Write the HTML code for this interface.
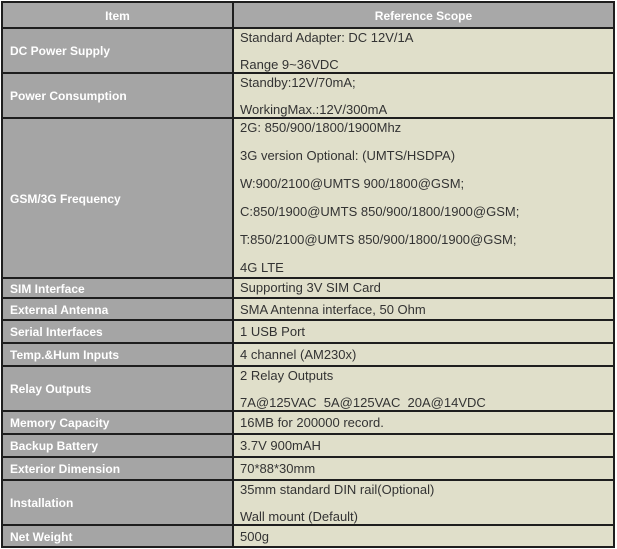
<!DOCTYPE html><html><head><style>
body{margin:0;background:#fff;width:617px;height:549px;position:relative;overflow:hidden;font-family:"Liberation Sans",Arial,sans-serif}
.r{position:absolute;left:1px;width:614px;box-sizing:border-box;border:2px solid #1e1e1e;border-bottom:none;display:flex}
.l{width:231px;background:#a5a5a5;color:#fff;font-weight:bold;font-size:12px;display:flex;align-items:center;padding-left:7px;box-sizing:border-box;border-right:2px solid #1e1e1e}
.v{flex:1;background:#e0dfca;color:#333;font-size:13px;padding:1px 0 0 6px;line-height:16px}
.v p{margin:0 0 12px}
.t p{margin-bottom:11px}
.h .l,.h .v{background:#a8a8a8;color:#fff;font-weight:bold;font-size:12px;justify-content:center;display:flex;align-items:center;padding:0}
.end{position:absolute;left:1px;top:546px;width:614px;height:2px;background:#1e1e1e}
</style></head><body>
<div class="r h" style="top:1px;height:27px"><div class="l">Item</div><div class="v">Reference Scope</div></div>
<div class="r" style="top:27px;height:46px"><div class="l">DC Power Supply</div><div class="v t"><p>Standard Adapter: DC 12V/1A</p><p>Range 9~36VDC</p></div></div>
<div class="r" style="top:72px;height:46px"><div class="l">Power Consumption</div><div class="v t"><p>Standby:12V/70mA;</p><p>WorkingMax.:12V/300mA</p></div></div>
<div class="r" style="top:117px;height:161px"><div class="l">GSM/3G Frequency</div><div class="v"><p>2G: 850/900/1800/1900Mhz</p><p>3G version Optional: (UMTS/HSDPA)</p><p>W:900/2100@UMTS 900/1800@GSM;</p><p>C:850/1900@UMTS 850/900/1800/1900@GSM;</p><p>T:850/2100@UMTS 850/900/1800/1900@GSM;</p><p>4G LTE</p></div></div>
<div class="r" style="top:277px;height:21px"><div class="l">SIM Interface</div><div class="v">Supporting 3V SIM Card</div></div>
<div class="r" style="top:297px;height:23px"><div class="l">External Antenna</div><div class="v" style="padding-top:3px">SMA Antenna interface, 50 Ohm</div></div>
<div class="r" style="top:319px;height:24px"><div class="l">Serial Interfaces</div><div class="v" style="padding-top:3px">1 USB Port</div></div>
<div class="r" style="top:342px;height:24px"><div class="l">Temp.&amp;Hum Inputs</div><div class="v" style="padding-top:3px">4 channel (AM230x)</div></div>
<div class="r" style="top:365px;height:46px"><div class="l">Relay Outputs</div><div class="v t"><p>2 Relay Outputs</p><p>7A@125VAC&nbsp; 5A@125VAC&nbsp; 20A@14VDC</p></div></div>
<div class="r" style="top:410px;height:24px"><div class="l">Memory Capacity</div><div class="v" style="padding-top:3px">16MB for 200000 record.</div></div>
<div class="r" style="top:433px;height:24px"><div class="l">Backup Battery</div><div class="v" style="padding-top:3px">3.7V 900mAH</div></div>
<div class="r" style="top:456px;height:24px"><div class="l">Exterior Dimension</div><div class="v" style="padding-top:3px">70*88*30mm</div></div>
<div class="r" style="top:479px;height:46px"><div class="l">Installation</div><div class="v t"><p>35mm standard DIN rail(Optional)</p><p>Wall mount (Default)</p></div></div>
<div class="r" style="top:524px;height:23px"><div class="l">Net Weight</div><div class="v" style="padding-top:3px">500g</div></div>
<div class="end"></div>
</body></html>
